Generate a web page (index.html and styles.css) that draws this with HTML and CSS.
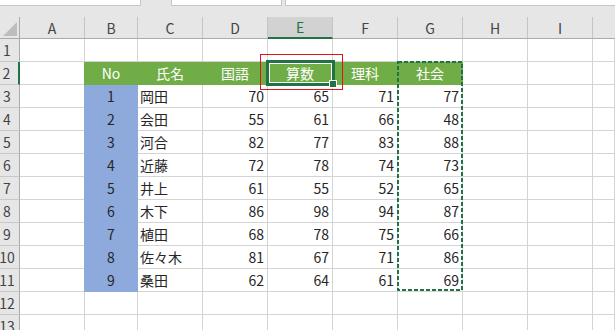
FILE: index.html
```html
<!DOCTYPE html>
<html lang="ja">
<head>
    <meta charset="UTF-8">
    <meta name="viewport" content="width=device-width, initial-scale=1.0">
    <title>成績表 - Excel</title>
    <link rel="stylesheet" href="styles.css">
</head>
<body>

<div id="book">
    <div class="topbar">
        <div class="box box-name"></div>
        <div class="box box-fx"></div>
        <div class="box box-formula"></div>
    </div>
    <div class="gap"></div>

    <div class="sheet">
        <div class="row colhead">
            <div class="corner">
                <svg width="19" height="21" viewBox="0 0 19 21"><polygon points="3,19 17,19 17,5" fill="#bdbdbd"/></svg>
            </div>
            <div class="ch">A</div><div class="ch">B</div><div class="ch">C</div><div class="ch">D</div>
            <div class="ch sel">E</div><div class="ch">F</div><div class="ch">G</div><div class="ch">H</div>
            <div class="ch">I</div><div class="ch rest"></div>
        </div>

        <div class="row">
            <div class="rh">1</div>
            <div class="c"></div><div class="c"></div><div class="c"></div><div class="c"></div><div class="c"></div>
            <div class="c"></div><div class="c"></div><div class="c"></div><div class="c"></div><div class="c"></div>
        </div>

        <div class="row">
            <div class="rh sel">2</div>
            <div class="c"></div>
            <div class="c g">No</div><div class="c g">氏名</div><div class="c g">国語</div>
            <div class="c g">算数</div><div class="c g">理科</div><div class="c g">社会</div>
            <div class="c"></div><div class="c"></div><div class="c"></div>
        </div>

        <div class="row">
            <div class="rh">3</div><div class="c"></div>
            <div class="c b">1</div><div class="c name">岡田</div>
            <div class="c num">70</div><div class="c num">65</div><div class="c num">71</div><div class="c num">77</div>
            <div class="c"></div><div class="c"></div><div class="c"></div>
        </div>
        <div class="row">
            <div class="rh">4</div><div class="c"></div>
            <div class="c b">2</div><div class="c name">会田</div>
            <div class="c num">55</div><div class="c num">61</div><div class="c num">66</div><div class="c num">48</div>
            <div class="c"></div><div class="c"></div><div class="c"></div>
        </div>
        <div class="row">
            <div class="rh">5</div><div class="c"></div>
            <div class="c b">3</div><div class="c name">河合</div>
            <div class="c num">82</div><div class="c num">77</div><div class="c num">83</div><div class="c num">88</div>
            <div class="c"></div><div class="c"></div><div class="c"></div>
        </div>
        <div class="row">
            <div class="rh">6</div><div class="c"></div>
            <div class="c b">4</div><div class="c name">近藤</div>
            <div class="c num">72</div><div class="c num">78</div><div class="c num">74</div><div class="c num">73</div>
            <div class="c"></div><div class="c"></div><div class="c"></div>
        </div>
        <div class="row">
            <div class="rh">7</div><div class="c"></div>
            <div class="c b">5</div><div class="c name">井上</div>
            <div class="c num">61</div><div class="c num">55</div><div class="c num">52</div><div class="c num">65</div>
            <div class="c"></div><div class="c"></div><div class="c"></div>
        </div>
        <div class="row">
            <div class="rh">8</div><div class="c"></div>
            <div class="c b">6</div><div class="c name">木下</div>
            <div class="c num">86</div><div class="c num">98</div><div class="c num">94</div><div class="c num">87</div>
            <div class="c"></div><div class="c"></div><div class="c"></div>
        </div>
        <div class="row">
            <div class="rh">9</div><div class="c"></div>
            <div class="c b">7</div><div class="c name">植田</div>
            <div class="c num">68</div><div class="c num">78</div><div class="c num">75</div><div class="c num">66</div>
            <div class="c"></div><div class="c"></div><div class="c"></div>
        </div>
        <div class="row">
            <div class="rh">10</div><div class="c"></div>
            <div class="c b">8</div><div class="c name">佐々木</div>
            <div class="c num">81</div><div class="c num">67</div><div class="c num">71</div><div class="c num">86</div>
            <div class="c"></div><div class="c"></div><div class="c"></div>
        </div>
        <div class="row">
            <div class="rh">11</div><div class="c"></div>
            <div class="c b">9</div><div class="c name">桑田</div>
            <div class="c num">62</div><div class="c num">64</div><div class="c num">61</div><div class="c num">69</div>
            <div class="c"></div><div class="c"></div><div class="c"></div>
        </div>

        <div class="row">
            <div class="rh">12</div>
            <div class="c"></div><div class="c"></div><div class="c"></div><div class="c"></div><div class="c"></div>
            <div class="c"></div><div class="c"></div><div class="c"></div><div class="c"></div><div class="c"></div>
        </div>
        <div class="row">
            <div class="rh">13</div>
            <div class="c"></div><div class="c"></div><div class="c"></div><div class="c"></div><div class="c"></div>
            <div class="c"></div><div class="c"></div><div class="c"></div><div class="c"></div><div class="c"></div>
        </div>
    </div>

    <!-- copy range G2:G11 (marching ants) -->
    <svg class="ants" width="615" height="330">
        <rect x="398" y="62" width="64" height="228" fill="none" stroke="#217346" stroke-width="2" stroke-dasharray="4 2"/>
    </svg>
    <!-- active cell E2 -->
    <div class="active"></div>
    <div class="handle"></div>
    <!-- annotation -->
    <div class="mark"></div>
</div>

</body>
</html>
```

FILE: styles.css
```css
* {
    box-sizing: border-box;
}
body {
    margin: 0;
    width: 615px;
    height: 330px;
    overflow: hidden;
    background: #fff;
    font-family: "Noto Sans CJK JP", "Noto Sans", sans-serif;
    font-size: 14px;
    color: #262626;
}
#book {
    position: relative;
    width: 615px;
    height: 330px;
    overflow: hidden;
}
.topbar {
    display: flex;
    height: 6px;
    background: #e6e6e6;
}
.box {
    height: 6px;
    background: #fff;
    border: 1px solid #c6c6c6;
    border-top: none;
}
.box-name {
    width: 141px;
    border-left: none;
}
.box-fx {
    width: 111px;
    margin-left: 30px;
}
.box-formula {
    flex: 1;
    margin-left: 3px;
    border-right: none;
}
.gap {
    height: 11px;
    background: #e6e6e6;
}
.row {
    display: grid;
    grid-template-columns: 20px 65px 53px 65px 65px 65px 65px 65px 65px 65px 1fr;
    height: 23px;
}
.colhead {
    height: 22px;
}
.corner,
.ch,
.rh {
    background: #e6e6e6;
    color: #444;
    display: flex;
    align-items: center;
    justify-content: center;
}
.corner {
    border-right: 1px solid #ababab;
    border-bottom: 1px solid #ababab;
}
.corner svg {
    display: block;
}
.ch {
    border-right: 1px solid #c4c4c4;
    border-bottom: 1px solid #ababab;
}
.ch.rest {
    border-right: none;
}
.ch.sel {
    background: #d2d2d2;
    color: #217346;
    border-bottom: 2px solid #217346;
}
.rh {
    padding-right: 5px;
    border-right: 1px solid #ababab;
    border-bottom: 1px solid #c8c8c8;
}
.rh.sel {
    border-right: 2px solid #217346;
}
.c {
    display: flex;
    align-items: center;
    border-right: 1px solid #d4d4d4;
    border-bottom: 1px solid #d4d4d4;
    white-space: nowrap;
}
.c.g {
    justify-content: center;
    background: #70ad47;
    color: #fff;
    border-color: #70ad47;
    box-shadow: -1px 0 0 #70ad47;
}
.c.b {
    justify-content: center;
    background: #8ea9db;
    border-color: #8ea9db;
    box-shadow: -1px 0 0 #8ea9db;
}
.c.name {
    padding-left: 2px;
}
.c.num {
    justify-content: flex-end;
    padding-right: 3px;
}
.ants {
    position: absolute;
    left: 0;
    top: 0;
    pointer-events: none;
}
.active {
    position: absolute;
    left: 266px;
    top: 60px;
    width: 69px;
    height: 26px;
    border: 3px solid #217346;
    box-shadow: inset 0 0 0 1px #fff;
}
.handle {
    position: absolute;
    left: 330px;
    top: 81px;
    width: 6px;
    height: 6px;
    background: #217346;
    box-shadow: 0 0 0 1px #fff;
}
.mark {
    position: absolute;
    left: 260px;
    top: 54px;
    width: 83px;
    height: 36px;
    border: 1px solid #e3121b;
}
```
